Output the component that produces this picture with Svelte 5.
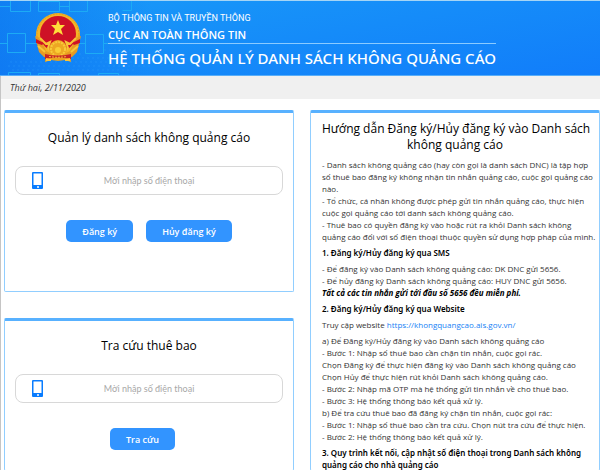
<script lang="ts">
	let registerPhone = $state('');
	let lookupPhone = $state('');
</script>

{#snippet phoneIcon()}
	<svg class="phone-icon" viewBox="0 0 11 17" aria-hidden="true">
		<rect width="11" height="17" rx="1" fill="#087cff" />
		<rect x="1.500" y="1.500" width="8" height="11.500" fill="#fff" />
		<rect x="5" y="14" width="2" height="2" rx="1" fill="#fff" />
	</svg>
{/snippet}

<div class="page">
	<header>
		<svg class="pattern" viewBox="0 0 150 74" aria-hidden="true">
			<g fill="none" stroke="#1cabf5" stroke-width="1">
				<path d="M0 5.500h10.500M10.500 -4v14.500h20V-4M38.500 -1v1.500h21v10h-21V.500M69.500 -5v15.500h18V-5M59.500 5.500h10" />
				<path d="M0 42.500h7.500M7.500 32.500h18v19h-18zM25.500 42.500h60M85.500 33.500h18v19h-18zM103.500 42.500h28M131.500 -2v11.500h-9" />
				<path d="M8.500 75v-3.500h22V75M38.500 75v-2.500h21V75M98.500 75v-2.500h20V75" />
			</g>
			<g fill="none" stroke="#38a5ff" stroke-dasharray="2 3" opacity="0.3">
				<path d="M10 61h126M8 65h142M12 69h124M62 57h70M64 53h20M104 49h35" />
			</g>
		</svg>
		<svg class="emblem" viewBox="0 0 46 50" aria-hidden="true">
			<path d="M11 38l-1 11 6-2 7 1 7-1 6 2-1-11z" fill="#e9a21e" />
			<circle cx="23" cy="22" r="22" fill="#f4b527" />
			<circle cx="23" cy="22" r="21" fill="none" stroke="#e79a18" stroke-dasharray="2 1" />
			<circle cx="23" cy="21" r="18" fill="#ce1126" />
			<path d="M23 7l2 5h5l-4 4 2 6-5-3-5 3 2-6-4-4h5z" fill="#ffde3b" />
			<path d="M0 23l5 2 6 13 6 3-1 4-7-1-5-5z" fill="#e79b23" />
			<path d="M46 23l-5 2-6 13-6 3 1 4 7-1 5-5z" fill="#e79b23" />
			<path d="M1 26l8 4-2 2-6-2zM45 26l-8 4 2 2 6-2z" fill="#ce1126" />
			<path d="M5 25l6 6 4-2-2 6 4 5M41 25l-6 6-4-2 2 6-4 5M3 33l7 6M43 33l-7 6" fill="none" stroke="#f8c637" stroke-width="2" />
			<circle cx="23" cy="36" r="9" fill="#eda823" />
			<circle cx="23" cy="36" r="7" fill="none" stroke="#f8cb3a" stroke-width="2" stroke-dasharray="2 1" />
			<circle cx="23" cy="37" r="3" fill="#f9cd35" />
			<path d="M10 41q13 3 26 0v5q-13-3-26 0z" fill="#c92326" />
			<path d="M14 43.500q9 1.500 18 0" fill="none" stroke="#f5c13a" stroke-dasharray="2 1" />
			<path d="M11 48v-3l5 1v2zM35 48v-3l-5 1v2z" fill="#ffc331" />
		</svg>
		<div class="titles">
			<p class="ministry">BỘ THÔNG TIN VÀ TRUYỀN THÔNG</p>
			<p class="department">CỤC AN TOÀN THÔNG TIN</p>
			<h1>HỆ THỐNG QUẢN LÝ DANH SÁCH KHÔNG QUẢNG CÁO</h1>
		</div>
	</header>

	<div class="date">Thứ hai, 2/11/2020</div>

	<main>
		<div class="forms">
			<form class="card register" onsubmit={(e) => e.preventDefault()}>
				<h2>Quản lý danh sách không quảng cáo</h2>
				<label class="phone-field">
					{@render phoneIcon()}
					<input type="tel" bind:value={registerPhone} placeholder="Mời nhập số điện thoại" aria-label="Số điện thoại đăng ký" />
				</label>
				<div class="buttons">
					<button type="submit">Đăng ký</button>
					<button type="button">Hủy đăng ký</button>
				</div>
			</form>

			<form class="card lookup" onsubmit={(e) => e.preventDefault()}>
				<h2>Tra cứu thuê bao</h2>
				<label class="phone-field">
					{@render phoneIcon()}
					<input type="tel" bind:value={lookupPhone} placeholder="Mời nhập số điện thoại" aria-label="Số điện thoại tra cứu" />
				</label>
				<div class="buttons">
					<button type="submit">Tra cứu</button>
				</div>
			</form>
		</div>

		<article class="card guide">
			<h2>Hướng dẫn Đăng ký/Hủy đăng ký vào Danh sách<br />không quảng cáo</h2>
			<p>
				- Danh sách không quảng cáo (hay còn gọi là danh sách DNC) là tập hợp<br />
				số thuê bao đăng ký không nhận tin nhắn quảng cáo, cuộc gọi quảng cáo<br />
				nào.<br />
				- Tổ chức, cá nhân không được phép gửi tin nhắn quảng cáo, thực hiện<br />
				cuộc gọi quảng cáo tới danh sách không quảng cáo.<br />
				- Thuê bao có quyền đăng ký vào hoặc rút ra khỏi Danh sách không<br />
				quảng cáo đối với số điện thoại thuộc quyền sử dụng hợp pháp của mình.
			</p>
			<h3>1. Đăng ký/Hủy đăng ký qua SMS</h3>
			<p>
				- Để đăng ký vào Danh sách không quảng cáo: DK DNC gửi 5656.<br />
				- Để hủy đăng ký Danh sách không quảng cáo: HUY DNC gửi 5656.<br />
				<em>Tất cả các tin nhắn gửi tới đầu số 5656 đều miễn phí.</em>
			</p>
			<h3>2. Đăng ký/Hủy đăng ký qua Website</h3>
			<p>Truy cập website <a href="https://khongquangcao.ais.gov.vn/">https://khongquangcao.ais.gov.vn/</a></p>
			<p>
				a) Để Đăng ký/Hủy đăng ký vào Danh sách không quảng cáo<br />
				- Bước 1: Nhập số thuê bao cần chặn tin nhắn, cuộc gọi rác.<br />
				Chọn Đăng ký để thực hiện đăng ký vào Danh sách không quảng cáo<br />
				Chọn Hủy để thực hiện rút khỏi Danh sách không quảng cáo.<br />
				- Bước 2: Nhập mã OTP mà hệ thống gửi tin nhắn về cho thuê bao.<br />
				- Bước 3: Hệ thống thông báo kết quả xử lý.<br />
				b) Để tra cứu thuê bao đã đăng ký chặn tin nhắn, cuộc gọi rác:<br />
				- Bước 1: Nhập số thuê bao cần tra cứu. Chọn nút tra cứu để thực hiện.<br />
				- Bước 2: Hệ thống thông báo kết quả xử lý.
			</p>
			<h3>3. Quy trình kết nối, cập nhật số điện thoại trong Danh sách không<br />quảng cáo cho nhà quảng cáo</h3>
		</article>
	</main>
</div>

<style>
	:global(body) {
		margin: 0;
		background: #fff;
	}

	.page {
		box-sizing: border-box;
		min-height: 100vh;
		display: flex;
		flex-direction: column;
		font-family: "Open Sans", "Noto Sans", sans-serif;
		color: #333;
	}

	h1, h2, h3, p {
		margin: 0;
	}

	header {
		position: relative;
		display: flex;
		align-items: flex-start;
		gap: 27px;
		box-sizing: border-box;
		height: 76px;
		padding: 12px 16px 0 35px;
		border-top: 1px solid #a5d5f5;
		border-bottom: 1px solid #59aef8;
		background: linear-gradient(170deg, #199af8, #117dfa);
		color: #fff;
	}

	/* circuit pattern behind the emblem */
	.pattern {
		position: absolute;
		top: 0;
		left: 0;
		width: 150px;
		height: 74px;
		background: linear-gradient(to right, #0866ed80, #0866ed00);
	}

	.emblem {
		position: relative;
		flex: none;
		width: 46px;
		height: 50px;
	}

	.titles {
		position: relative;
		margin-top: -3px;
		white-space: nowrap;
	}

	.ministry {
		font-family: Roboto, sans-serif;
		font-size: 9px;
		line-height: 16px;
	}

	.department {
		border-bottom: 1px solid #8bcbff;
		font-size: 11px;
		font-weight: 600;
		line-height: 17px;
	}

	h1 {
		font-family: "Noto Sans", sans-serif;
		font-size: 15px;
		font-weight: 500;
		line-height: 28px;
	}

	.date {
		padding: 0 9px;
		border-left: 1px solid #c5c5c5;
		background: #f0f0f0;
		font-size: 9px;
		font-style: italic;
		line-height: 23px;
	}

	main {
		flex: 1;
		display: grid;
		grid-template-columns: minmax(0, 1fr) minmax(0, 1fr);
		gap: 16px;
		padding: 11px 0 0 3px;
		border-left: 1px solid #c5c5c5;
	}

	.forms {
		display: flex;
		flex-direction: column;
		gap: 26px;
	}

	.card {
		box-sizing: border-box;
		border: 1px solid #91ceff;
		border-top: 3px solid #58b1ff;
		border-radius: 2px;
	}

	.forms .card {
		padding: 0 10px;
		text-align: center;
	}

	.register {
		height: 182px;
	}

	.lookup {
		flex: 1;
		border-bottom: none;
	}

	h2 {
		color: #000;
		font-size: 12px;
		font-weight: 500;
		line-height: 16px;
		text-align: center;
	}

	.forms h2 {
		padding: 17px 0 20px;
	}

	.phone-field {
		display: flex;
		align-items: center;
		box-sizing: border-box;
		height: 29px;
		padding: 0 16px;
		border: 1px solid #d8d8d8;
		border-radius: 8px;
	}

	.phone-icon {
		flex: none;
		width: 11px;
		height: 17px;
	}

	.phone-field input {
		flex: 1;
		min-width: 0;
		margin-right: 11px;
		padding: 0;
		border: none;
		outline: none;
		background: none;
		color: #333;
		font-family: Lato, "Noto Sans", sans-serif;
		font-size: 9px;
		text-align: center;
	}

	.phone-field input::placeholder {
		color: #a8a8a8;
		opacity: 1;
	}

	.buttons {
		display: flex;
		justify-content: center;
		gap: 13px;
		padding-top: 25px;
	}

	.lookup .buttons {
		padding-right: 13px;
	}

	button {
		height: 22px;
		padding: 0 16px;
		border: none;
		border-radius: 5px;
		background: #3294ff;
		color: #fff;
		font: inherit;
		font-size: 9px;
		font-weight: 600;
		white-space: nowrap;
		cursor: pointer;
	}

	.guide {
		padding: 8px 11px 0;
		border-bottom: none;
		font-size: 8px;
		line-height: 12px;
		white-space: nowrap;
	}

	.guide h2 {
		margin-bottom: 6px;
	}

	.guide p,
	.guide h3 {
		margin-bottom: 4px;
	}

	.guide h3:last-child {
		margin-bottom: 0;
	}

	h3 {
		color: #000;
		font-family: "Noto Sans", sans-serif;
		font-size: 8px;
		font-weight: 600;
		line-height: 12px;
	}

	em {
		color: #000;
		font-weight: 700;
	}

	a {
		color: #1681f5;
		text-decoration: none;
	}
</style>
